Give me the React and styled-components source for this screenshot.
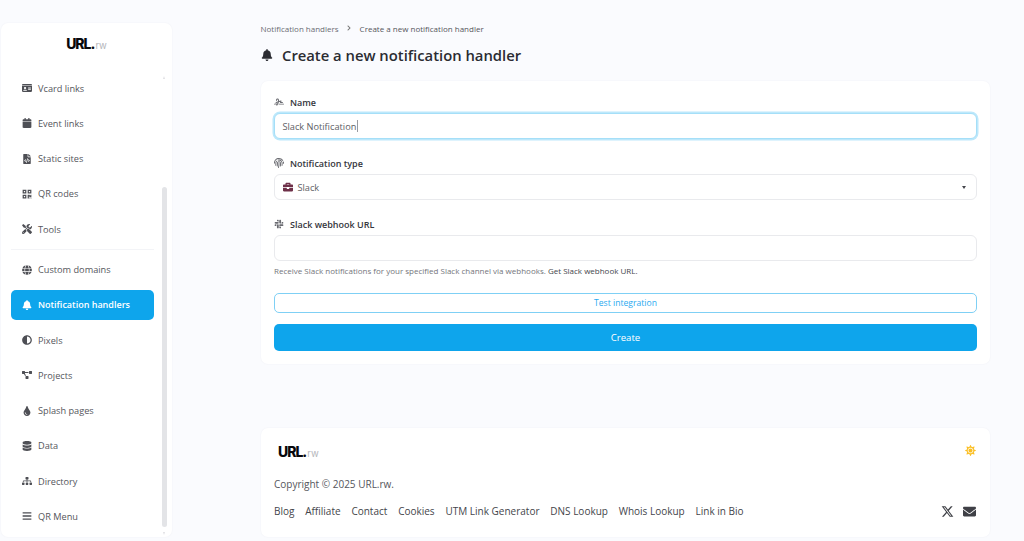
import React from 'react';
import styled, { createGlobalStyle } from 'styled-components';
import {
  FaIdCard, FaCalendar, FaFileCode, FaQrcode, FaTools, FaGlobe, FaBell, FaAdjust,
  FaProjectDiagram, FaTint, FaDatabase, FaSitemap, FaBars, FaFingerprint,
  FaSlack, FaBriefcase, FaSun, FaEnvelope, FaChevronRight,
} from 'react-icons/fa';
import { FaXTwitter, FaSignature } from 'react-icons/fa6';

const Global = createGlobalStyle`
  html, body { margin: 0; height: 541px; overflow: hidden; background: #fafbfe; }
  body { font-family: "Open Sans", "Noto Sans", "Liberation Sans", sans-serif; color: #3f4046; }
  * { box-sizing: border-box; }
`;

const Page = styled.div`
  display: flex;
  align-items: flex-start;
  height: 541px;
  padding: 23px 0 0 1px;
`;

const Sidebar = styled.aside`
  position: relative;
  flex: none;
  width: 171px;
  height: 514px;
  background: #fff;
  border-radius: 7px;
  box-shadow: 0 0 2px rgba(30, 40, 70, 0.05);
  overflow: hidden;
`;

const SidebarLogo = styled.div`
  height: 50px;
  display: flex;
  justify-content: center;
  align-items: center;
  padding: 0 0 9px 0;
`;

const LogoMark = styled.span`
  font-family: "Inter", "Liberation Sans", sans-serif;
  font-weight: 800;
  font-size: 14px;
  letter-spacing: -1px;
  color: #08080c;
  line-height: 1;
`;

const LogoTld = styled.span`
  font-family: "Inter", "Liberation Sans", sans-serif;
  font-weight: 400;
  font-size: 9.5px;
  letter-spacing: 0;
  color: #b4b6ba;
  margin-left: 1px;
`;

const Nav = styled.nav`
  display: flex;
  flex-direction: column;
  gap: 5.25px;
  padding: 0 18px 0 10px;
`;

const NavItem = styled.a`
  display: flex;
  align-items: center;
  height: 30px;
  padding: 0 0 0 11px;
  gap: 6px;
  border-radius: 5px;
  font-size: ${p => (p.$active ? 9 : 9.2)}px;
  color: ${p => (p.$active ? '#fff' : '#55565c')};
  background: ${p => (p.$active ? '#0ea5ec' : 'transparent')};
  font-weight: ${p => (p.$active ? 600 : 400)};
  white-space: nowrap;
  svg { flex: none; width: 10px; height: 10px; color: ${p => (p.$active ? '#fff' : '#4e4f55')}; }
`;

const NavDivider = styled.hr`
  border: 0;
  border-top: 1px solid #f3f4f7;
  margin: 0 0 -1px;
  height: 0;
`;

const ScrollTrack = styled.div`
  position: absolute;
  right: 5px;
  top: 50px;
  bottom: 2px;
  width: 5px;
`;

const ScrollThumb = styled.div`
  position: absolute;
  left: 0;
  right: 0;
  top: 114px;
  height: 340px;
  border-radius: 3px;
  background: #e3e4e7;
`;

const ScrollArrow = styled.div`
  position: absolute;
  left: 1px;
  width: 0;
  height: 0;
  border-left: 1.5px solid transparent;
  border-right: 1.5px solid transparent;
  ${p => (p.$down
    ? 'bottom: 0; border-top: 3px solid #dfe0e3;'
    : 'top: 3px; border-bottom: 3px solid #dfe0e3;')}
`;

const Main = styled.main`
  flex: none;
  width: 729px;
  margin-left: 89px;
`;

const Breadcrumb = styled.div`
  display: flex;
  align-items: center;
  gap: 7.5px;
  height: 10px;
  margin-bottom: 12px;
  margin-left: -0.5px;
  font-size: 8px;
  color: #62636a;
  svg { width: 6px; height: 6px; color: #777; }
`;

const Crumb = styled.span`
  color: ${p => (p.$current ? '#55565c' : '#6b6c73')};
`;

const Title = styled.h1`
  display: flex;
  align-items: center;
  gap: 9px;
  margin: 0 0 17px;
  height: 19px;
  font-size: 14.8px;
  font-weight: 600;
  color: #2b2c32;
  svg { width: 12px; height: 12px; color: #2b2c32; }
`;

const Card = styled.section`
  background: #fff;
  border-radius: 7px;
  box-shadow: 0 0 2px rgba(30, 40, 70, 0.05);
  padding: ${p => p.$pad};
  margin-bottom: ${p => p.$mb || 0}px;
`;

const Field = styled.div`
  margin-bottom: ${p => p.$mb}px;
`;

const Label = styled.label`
  display: flex;
  align-items: center;
  gap: 6px;
  height: 14px;
  margin-bottom: 4px;
  font-size: 9px;
  font-weight: 600;
  color: #35363c;
  svg { width: 10px; height: 10px; color: #6a6b71; }
`;

const InputBox = styled.div`
  display: flex;
  align-items: center;
  height: 26px;
  padding: 0 7.5px;
  border-radius: 6px;
  background: #fff;
  font-size: 9.2px;
  color: #5d5e65;
  border: 1px solid ${p => (p.$focus ? '#a5dff8' : '#e9eaed')};
  box-shadow: ${p => (p.$focus ? '0 0 0 1.5px #bde8fb' : 'none')};
`;

const Caret = styled.span`
  width: 1px;
  height: 12px;
  background: #9a9ba0;
  margin-left: 0.5px;
`;

const TypeIcon = styled.span`
  display: inline-flex;
  margin-right: 5px;
  svg { width: 10px; height: 10px; color: #6e3049; }
`;

const SelectArrow = styled.span`
  width: 0;
  height: 0;
  margin: 0 3px 0 auto;
  border-left: 2.5px solid transparent;
  border-right: 2.5px solid transparent;
  border-top: 3px solid #44454b;
`;

const Help = styled.p`
  margin: 4px 0 0;
  height: 11px;
  line-height: 11px;
  font-size: 8px;
  color: #74757b;
`;

const HelpLink = styled.a`
  color: #44454b;
`;

const OutlineButton = styled.button`
  display: block;
  width: 100%;
  height: 20px;
  margin: 0 0 11px;
  padding: 0;
  background: #fff;
  border: 1px solid #7fd0f5;
  border-radius: 5px;
  color: #2aaaf0;
  font: 400 8.6px "Open Sans", "Noto Sans", sans-serif;
`;

const PrimaryButton = styled.button`
  display: block;
  width: 100%;
  height: 27px;
  padding: 0;
  background: #0ea5ec;
  border: 0;
  border-radius: 5px;
  color: #fff;
  font: 400 9.6px "Open Sans", "Noto Sans", sans-serif;
`;

const FooterTop = styled.div`
  display: flex;
  justify-content: space-between;
  align-items: center;
  height: 18px;
  margin-bottom: 16px;
  padding-left: 4px;
  svg { width: 11px; height: 11px; color: #fbbf24; margin: 0 1px 3px 0; }
`;

const Copyright = styled.p`
  margin: 0 0 13px;
  height: 14px;
  line-height: 14px;
  font-size: 10px;
  color: #55565c;
`;

const FooterBottom = styled.div`
  display: flex;
  justify-content: space-between;
  align-items: center;
  height: 14px;
`;

const FooterLinks = styled.div`
  display: flex;
  gap: 10.8px;
  font-size: 10px;
  color: #44454b;
`;

const Socials = styled.div`
  display: flex;
  align-items: center;
  gap: 9px;
  padding-right: 1.5px;
  svg { width: 13px; height: 13px; color: #3f4046; }
`;

const top = [
  [FaIdCard, 'Vcard links'], [FaCalendar, 'Event links'], [FaFileCode, 'Static sites'],
  [FaQrcode, 'QR codes'], [FaTools, 'Tools'],
];
const bottom = [
  [FaGlobe, 'Custom domains'], [FaBell, 'Notification handlers', true], [FaAdjust, 'Pixels'],
  [FaProjectDiagram, 'Projects'], [FaTint, 'Splash pages'], [FaDatabase, 'Data'],
  [FaSitemap, 'Directory'], [FaBars, 'QR Menu'],
];
const links = ['Blog', 'Affiliate', 'Contact', 'Cookies', 'UTM Link Generator', 'DNS Lookup', 'Whois Lookup', 'Link in Bio'];

const renderItem = ([Icon, label, active]) => (
  <NavItem key={label} $active={active}><Icon />{label}</NavItem>
);

export default function App() {
  return (
    <>
      <Global />
      <Page>
        <Sidebar>
          <SidebarLogo><LogoMark>URL.<LogoTld>rw</LogoTld></LogoMark></SidebarLogo>
          <Nav>
            {top.map(renderItem)}
            <NavDivider />
            {bottom.map(renderItem)}
          </Nav>
          <ScrollTrack>
            <ScrollArrow />
            <ScrollThumb />
            <ScrollArrow $down />
          </ScrollTrack>
        </Sidebar>
        <Main>
          <Breadcrumb>
            <Crumb>Notification handlers</Crumb>
            <FaChevronRight />
            <Crumb $current>Create a new notification handler</Crumb>
          </Breadcrumb>
          <Title><FaBell />Create a new notification handler</Title>
          <Card $pad="14px 13px 13px" $mb={64}>
            <Field $mb={17}>
              <Label><FaSignature />Name</Label>
              <InputBox $focus>Slack Notification<Caret /></InputBox>
            </Field>
            <Field $mb={17}>
              <Label><FaFingerprint />Notification type</Label>
              <InputBox><TypeIcon><FaBriefcase /></TypeIcon>Slack<SelectArrow /></InputBox>
            </Field>
            <Field $mb={17}>
              <Label><FaSlack />Slack webhook URL</Label>
              <InputBox />
              <Help>Receive Slack notifications for your specified Slack channel via webhooks. <HelpLink>Get Slack webhook URL.</HelpLink></Help>
            </Field>
            <OutlineButton>Test integration</OutlineButton>
            <PrimaryButton>Create</PrimaryButton>
          </Card>
          <Card $pad="15px 13px 19px">
            <FooterTop>
              <LogoMark>URL.<LogoTld>rw</LogoTld></LogoMark>
              <FaSun />
            </FooterTop>
            <Copyright>Copyright © 2025 URL.rw.</Copyright>
            <FooterBottom>
              <FooterLinks>{links.map(l => <span key={l}>{l}</span>)}</FooterLinks>
              <Socials><FaXTwitter /><FaEnvelope /></Socials>
            </FooterBottom>
          </Card>
        </Main>
      </Page>
    </>
  );
}
